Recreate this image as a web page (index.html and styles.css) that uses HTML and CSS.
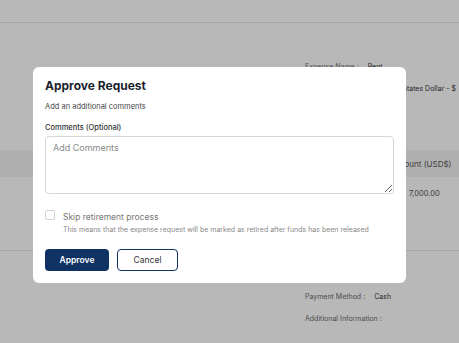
FILE: index.html
```html
<!DOCTYPE html>
<html lang="en">
<head>
    <meta charset="UTF-8">
    <meta name="viewport" content="width=device-width, initial-scale=1.0">
    <title>Approve Request</title>
    <link rel="stylesheet" href="styles.css">
</head>
<body>

<div class="page">
    <header class="page-header"></header>

    <section class="details">
        <div class="detail-row"><span class="label">Expense Name :</span><span class="value">Rent</span></div>
        <div class="detail-row"><span class="label">Expense Currency :</span><span class="value">United States Dollar - $</span></div>
    </section>

    <table class="items">
        <thead>
            <tr><th></th><th class="amount">Amount (USD$)</th></tr>
        </thead>
        <tbody>
            <tr><td></td><td class="amount">7,000.00</td></tr>
        </tbody>
    </table>

    <section class="details lower">
        <div class="detail-row"><span class="label">Payment Method :</span><span class="value">Cash</span></div>
        <div class="detail-row"><span class="label">Additional Information :</span><span class="value"></span></div>
    </section>
</div>

<!-- Approve modal -->
<div class="overlay">
    <div class="modal">
        <h2>Approve Request</h2>
        <p class="subtitle">Add an additional comments</p>

        <label class="field-label" for="comments">Comments (Optional)</label>
        <textarea id="comments" placeholder="Add Comments"></textarea>

        <div class="check-row">
            <input type="checkbox" id="skipRetirement">
            <div class="check-text">
                <label for="skipRetirement" class="check-title">Skip retirement process</label>
                <p class="check-hint">This means that the expense request will be marked as retired after funds has been released</p>
            </div>
        </div>

        <div class="actions">
            <button class="btn-primary">Approve</button>
            <button class="btn-outline">Cancel</button>
        </div>
    </div>
</div>

</body>
</html>
```

FILE: styles.css
```css
* {
    box-sizing: border-box;
}
body {
    margin: 0;
    font-family: Inter, "Noto Sans", sans-serif;
    background-color: #fff;
    overflow: hidden;
}
.page {
    height: 343px;
}
.page-header {
    height: 23px;
    border-bottom: 1px solid #e6e6e6;
}
.details {
    padding: 39px 0 0 305px;
}
.detail-row {
    font-size: 7px;
    height: 22px;
    white-space: nowrap;
}
.detail-row .label {
    color: #6b6b6b;
    margin-right: 9px;
}
.detail-row .value {
    color: #333;
}
.items {
    width: 100%;
    border-collapse: collapse;
    margin-top: 44px;
    font-size: 7.5px;
    color: #555;
}
.items th {
    background-color: #f4f4f4;
    height: 27px;
    font-size: 8px;
    font-weight: 400;
    text-align: left;
}
.items td {
    vertical-align: top;
    padding-top: 12px;
}
.items tbody tr {
    height: 73px;
    border-bottom: 1px solid #e6e6e6;
}
.items .amount {
    width: 80px;
}
.items td.amount {
    padding-left: 30px;
}
.items th.amount {
    padding-left: 13px;
}
.lower {
    padding-top: 41px;
}
.overlay {
    position: fixed;
    inset: 0;
    background-color: rgba(0, 0, 0, 0.28);
    padding: 67px 0 0 33px;
}
.modal {
    width: 373px;
    height: 216px;
    background-color: #fff;
    border-radius: 6px;
    padding: 11px 12px 0 12px;
}
.modal h2 {
    margin: 0;
    font-size: 12px;
    font-weight: 700;
    color: #1b1f2e;
    line-height: 16px;
}
.subtitle {
    margin: 8px 0 0 0;
    font-size: 7.5px;
    color: #444;
}
.field-label {
    display: block;
    margin-top: 12px;
    font-size: 7.5px;
    font-weight: 500;
    color: #333;
}
textarea {
    display: block;
    width: 349px;
    height: 58px;
    margin-top: 4px;
    padding: 5px 7px;
    border: 1px solid #d4d6dc;
    border-radius: 4px;
    font-family: inherit;
    font-size: 9px;
    color: #333;
}
textarea::placeholder {
    color: #8a8a8a;
}
.check-row {
    display: flex;
    gap: 8px;
    margin-top: 16px;
}
.check-row input {
    appearance: none;
    width: 10px;
    height: 10px;
    margin: 0;
    border: 1px solid #cfd2d8;
    border-radius: 2px;
    background: #fff;
}
.check-text {
    padding-top: 2px;
}
.check-title {
    display: block;
    font-size: 8.5px;
    color: #777;
    line-height: 11px;
}
.check-hint {
    margin: 2px 0 0 0;
    font-size: 7px;
    color: #888;
}
.actions {
    display: flex;
    gap: 8px;
    margin-top: 15px;
}
.actions button {
    height: 22px;
    border-radius: 4px;
    font-family: inherit;
    font-size: 8.5px;
    cursor: pointer;
}
.btn-primary {
    width: 64px;
    background-color: #0f3263;
    border: none;
    color: #fff;
    font-weight: 600;
}
.btn-outline {
    width: 61px;
    background-color: #fff;
    border: 1px solid #0f3263;
    color: #333;
}
```
